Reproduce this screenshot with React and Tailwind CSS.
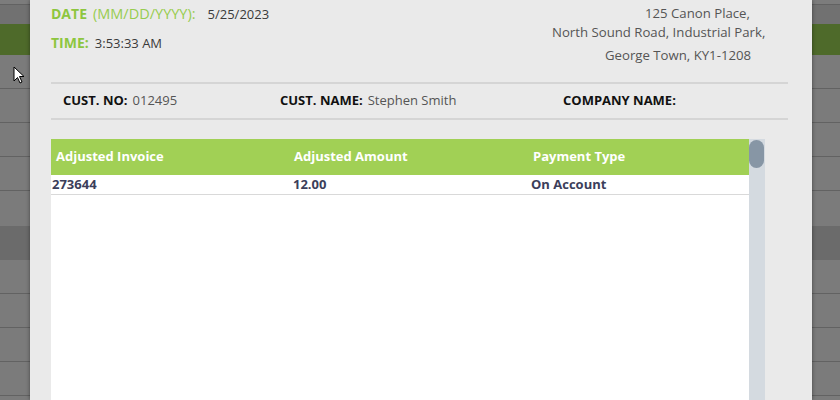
import React from "react";

const bgRows = [
  { h: "h-[5px]", c: "bg-[#7c7c7c] border-b border-[#626262]" },
  { h: "h-[19px]", c: "bg-[#717171]" },
  { h: "h-[31px]", c: "bg-[#4e6a2a]" },
  { h: "h-[34px]", c: "bg-[#7b7b7b] border-b border-[#626262]" },
  { h: "h-[34px]", c: "bg-[#7b7b7b] border-b border-[#626262]" },
  { h: "h-[34px]", c: "bg-[#7b7b7b] border-b border-[#626262]" },
  { h: "h-[34px]", c: "bg-[#7b7b7b] border-b border-[#626262]" },
  { h: "h-[35px]", c: "bg-[#7b7b7b]" },
  { h: "h-[34px]", c: "bg-[#6b6b6b]" },
  { h: "h-[34px]", c: "bg-[#7b7b7b] border-b border-[#626262]" },
  { h: "h-[34px]", c: "bg-[#7b7b7b] border-b border-[#626262]" },
  { h: "h-[34px]", c: "bg-[#7b7b7b] border-b border-[#626262]" },
  { h: "h-[34px]", c: "bg-[#7b7b7b] border-b border-[#626262]" },
  { h: "h-[10px]", c: "bg-[#7b7b7b]" },
];

const App = () => {
  return (
    <div className="relative w-[840px] h-[400px] overflow-hidden bg-[#7b7b7b] font-['Open_Sans',sans-serif]">
      <div className="flex flex-col">
        {bgRows.map((r, i) => (
          <div key={i} className={`${r.h} ${r.c} box-border`} />
        ))}
      </div>

      <svg className="absolute left-[13px] top-[66px]" width="12" height="19" viewBox="0 0 12 19">
        <path d="M1 1 L1 15 L4.5 11.5 L7 17 L9 16 L6.5 10.5 L11 10.5 Z" fill="#fff" stroke="#000" strokeWidth="1" strokeLinejoin="round" />
      </svg>

      <div className="absolute left-[30px] top-0 w-[782px] h-[400px] bg-[#eaeaea] shadow-[0_0_4px_rgba(0,0,0,0.45)]">
        <div className="flex h-[82px] pl-[21px]">
          <div className="w-[501px] pt-[4px]">
            <div className="flex items-center leading-[20px] text-[14px]">
              <span className="font-bold text-[#8dc63f]">DATE</span>
              <span className="ml-[6px] text-[14.5px] text-[#97cc4f]">(MM/DD/YYYY):</span>
              <span className="ml-[12px] text-[13px] text-[#3a3a3a]">5/25/2023</span>
            </div>
            <div className="flex items-center mt-[9px] leading-[20px] text-[14px]">
              <span className="font-bold text-[#8dc63f]">TIME:</span>
              <span className="ml-[6px] text-[13px] text-[#3a3a3a]">3:53:33 AM</span>
            </div>
          </div>
          <div className="flex flex-col text-[13.2px] text-[#555] leading-[20px]">
            <div className="mt-[3px] ml-[93px]">125 Canon Place,</div>
            <div className="mt-[-1px]">North Sound Road, Industrial Park,</div>
            <div className="mt-[3px] ml-[53px]">George Town, KY1-1208</div>
          </div>
        </div>

        <div className="ml-[21px] w-[737px] h-[2px] bg-[#d5d5d5]" />
        <div className="ml-[21px] w-[737px] h-[34px] flex items-center pl-[12px] text-[13px]">
          <div className="w-[217px] flex items-center">
            <span className="font-bold text-[#111]">CUST. NO:</span>
            <span className="ml-[5px] text-[#555]">012495</span>
          </div>
          <div className="w-[283px] flex items-center">
            <span className="font-bold text-[#111]">CUST. NAME:</span>
            <span className="ml-[5px] text-[#555]">Stephen Smith</span>
          </div>
          <div>
            <span className="font-bold text-[#111]">COMPANY NAME:</span>
          </div>
        </div>
        <div className="ml-[21px] w-[737px] h-[2px] bg-[#d5d5d5]" />

        <div className="ml-[21px] mt-[19px] flex h-[261px]">
          <div className="w-[698px] bg-white">
            <div className="h-[36px] bg-[#a1d055] flex items-center text-[13px] font-bold text-white">
              <div className="w-[243px] pl-[5px]">Adjusted Invoice</div>
              <div className="w-[239px]">Adjusted Amount</div>
              <div>Payment Type</div>
            </div>
            <div className="h-[20px] pt-[1px] flex items-center text-[13px] font-bold text-[#3b3e5a] border-b border-[#d9d9d9] box-border">
              <div className="w-[242px] pl-[1px]">273644</div>
              <div className="w-[238px]">12.00</div>
              <div>On Account</div>
            </div>
          </div>
          <div className="w-[16px] bg-[#d4dae0] pt-[1px]">
            <div className="h-[28px] w-[15px] rounded-full bg-[#8796a5]" />
          </div>
        </div>
      </div>
    </div>
  );
};

export default App;
